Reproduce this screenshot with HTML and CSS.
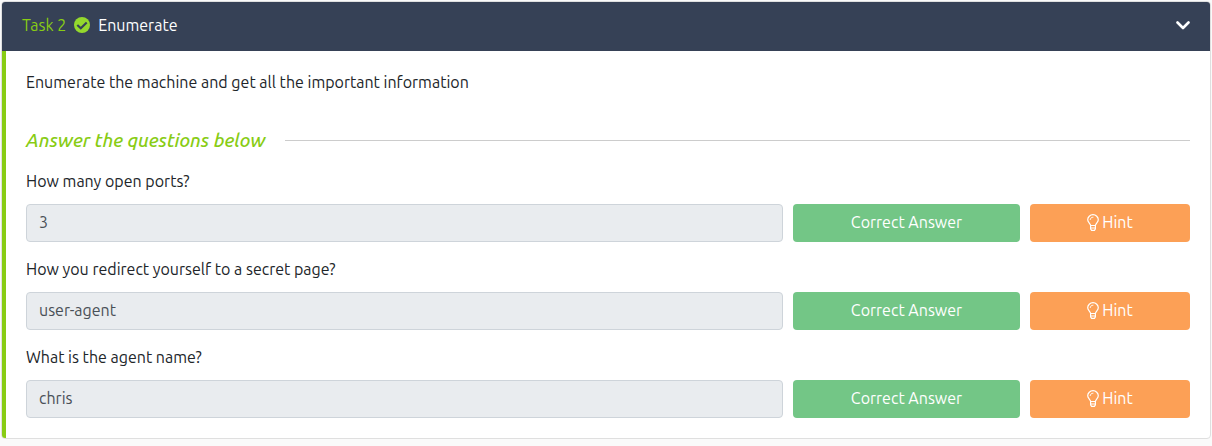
FILE: index.html
```html
<!DOCTYPE html>
<html lang="en">
<head>
<meta charset="utf-8">
<meta name="viewport" content="width=device-width, initial-scale=1">
<title>Task 2 - Enumerate</title>
<link rel="stylesheet" href="styles.css">
</head>
<body>
<svg class="sprite" aria-hidden="true">
  <symbol id="bulb" viewBox="0 0 12 17">
    <path d="M3.6 11.5C3.4 9.6 .7 8.4 .7 5.8a5.3 5.1 0 0 1 10.6 0c0 2.6-2.7 3.8-2.9 5.7zM3.6 11.5v3.3l1 1.5h2.8l1-1.5v-3.3M3.6 14h4.8" fill="none" stroke="currentColor" stroke-width="1.2" stroke-linejoin="round" stroke-linecap="round"/>
    <path d="M3.2 5.6C3.2 4.2 4.4 3.2 6 3.2" fill="none" stroke="currentColor" stroke-width=".9" stroke-linecap="round"/>
  </symbol>
</svg>
<section class="card">
  <header class="card-header">
    <span class="task-number">Task 2</span>
    <svg class="check" viewBox="0 0 16 16" aria-hidden="true"><circle cx="8" cy="8" r="8" fill="currentColor"/><path d="M3.3 7.9l3.5 3.4 5.9-5.9" fill="none" stroke="#364156" stroke-width="2.1"/></svg>
    <span class="task-title">Enumerate</span>
    <button class="toggle" type="button" aria-label="Collapse task"><svg class="chevron" viewBox="0 0 14 9" aria-hidden="true"><path d="M1.5 1.5L7 7l5.5-5.5" fill="none" stroke="currentColor" stroke-width="2.6" stroke-linecap="round" stroke-linejoin="round"/></svg></button>
  </header>
  <div class="card-body">
    <p class="description">Enumerate the machine and get all the important information</p>
    <h2 class="divider">Answer the questions below</h2>
    <form class="questions">
      <div class="question">
        <label class="prompt" for="q1">How many open ports?</label>
        <div class="answer-row">
          <input class="answer" id="q1" type="text" value="3" readonly>
          <button class="btn correct" type="button">Correct Answer</button>
          <button class="btn hint" type="button"><svg class="bulb" aria-hidden="true"><use href="#bulb"/></svg>Hint</button>
        </div>
      </div>
      <div class="question">
        <label class="prompt" for="q2">How you redirect yourself to a secret page?</label>
        <div class="answer-row">
          <input class="answer" id="q2" type="text" value="user-agent" readonly>
          <button class="btn correct" type="button">Correct Answer</button>
          <button class="btn hint" type="button"><svg class="bulb" aria-hidden="true"><use href="#bulb"/></svg>Hint</button>
        </div>
      </div>
      <div class="question">
        <label class="prompt" for="q3">What is the agent name?</label>
        <div class="answer-row">
          <input class="answer" id="q3" type="text" value="chris" readonly>
          <button class="btn correct" type="button">Correct Answer</button>
          <button class="btn hint" type="button"><svg class="bulb" aria-hidden="true"><use href="#bulb"/></svg>Hint</button>
        </div>
      </div>
    </form>
  </div>
</section>
</body>
</html>
```
FILE: styles.css
```css
* { box-sizing: border-box; }
body {
  margin: 0;
  padding: 1px;
  background: #fafafa;
  color: #212529;
  font: 16px/24px Ubuntu, "Noto Sans", sans-serif;
}
.sprite { display: none; }
.card {
  overflow: hidden;
  border: 1px solid #dfdfdf;
  border-radius: 4px;
  background: #fff;
}
.card-header {
  display: flex;
  align-items: center;
  gap: 8px;
  padding: 11px 20px 14px;
  background: #364156;
  color: #fff;
}
.task-number { color: #88cc14; }
.check { width: 16px; height: 16px; color: #94d82d; }
.toggle {
  display: flex;
  margin-left: auto;
  padding: 0;
  border: 0;
  background: none;
  color: #fff;
}
.chevron { width: 14px; height: 9px; }
.card-body {
  padding: 19px 20px 20px;
  border-left: 4px solid #88cc14;
}
.description { margin: 0 0 34px; }
.divider {
  display: flex;
  align-items: center;
  gap: 20px;
  margin: 0 0 17px;
  color: #88cc14;
  font-size: 19px;
  font-weight: 500;
  font-style: italic;
  line-height: 24px;
}
.divider::after {
  content: "";
  flex: 1;
  height: 1px;
  background: #ccc;
}
.questions {
  display: flex;
  flex-direction: column;
  gap: 15px;
}
.question {
  display: flex;
  flex-direction: column;
  gap: 11px;
}
.answer-row {
  display: grid;
  grid-template-columns: 757fr 227fr 160fr;
  gap: 10px;
}
.answer, .btn {
  min-width: 0;
  height: 38px;
  border-radius: 4px;
  font: inherit;
}
.answer {
  padding: 5px 12px 7px;
  border: 1px solid #ced4da;
  background: #e9ecef;
  color: #495057;
}
.btn {
  display: flex;
  align-items: center;
  justify-content: center;
  gap: 3px;
  padding: 0 0 2px;
  border: 0;
  color: #fff;
}
.correct { background: #73c686; }
.hint { background: #fca056; }
.bulb { width: 12px; height: 17px; }
```
